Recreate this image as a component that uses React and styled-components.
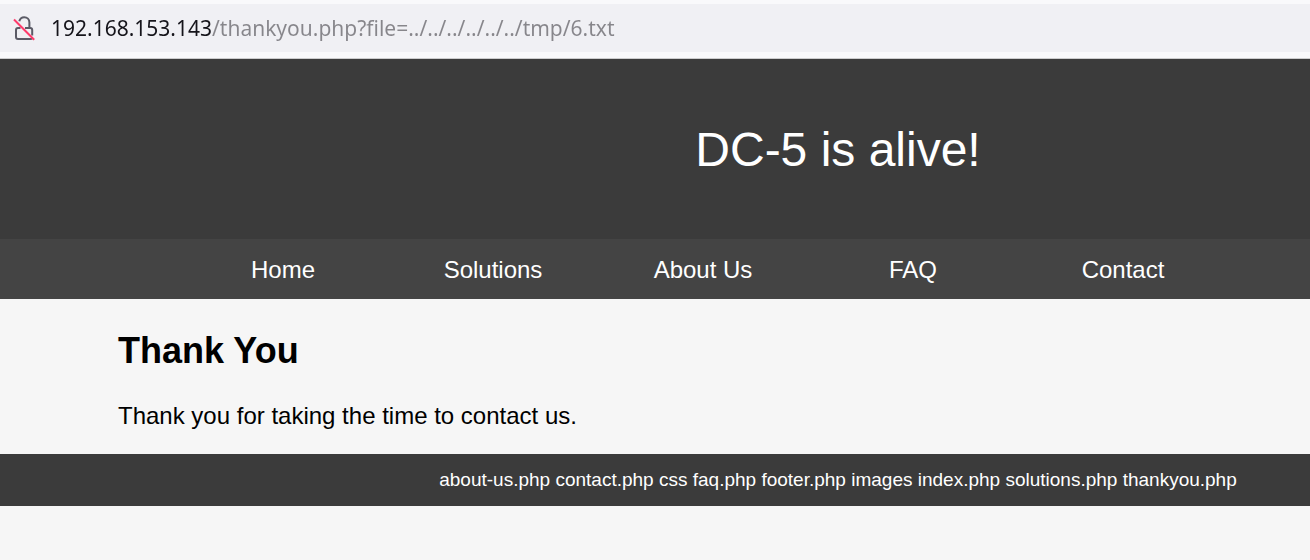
import React, { useState } from "react";
import styled, { createGlobalStyle } from "styled-components";

const GlobalStyle = createGlobalStyle`
  * { box-sizing: border-box; }
  body {
    margin: 0;
    background: #f6f6f6;
    color: #000;
    font: 24px/36px "Liberation Sans", Arial, sans-serif;
    overflow-x: hidden;
  }
`;

const Toolbar = styled.div`
  padding: 4px 0 6px;
  background: #f9f9fb;
  border-bottom: 1px solid #cccccd;
`;

const AddressBar = styled.form`
  display: flex;
  align-items: center;
  gap: 15px;
  height: 48px;
  padding-left: 12px;
  background: #f0f0f4;
`;

const SecurityButton = styled.button`
  display: flex;
  padding: 0;
  border: 0;
  background: none;
`;

const AddressInput = styled.input`
  flex: 1;
  min-width: 0;
  height: 32px;
  padding: 0;
  border: 0;
  outline: 0;
  color: transparent;
  background: linear-gradient(to right, #15141a 161px, #87868b 161px);
  background-clip: text;
  -webkit-background-clip: text;
  font: 21px/32px "Noto Sans", sans-serif;
`;

const Header = styled.header`
  padding: 60px 0 58px 366px;
  background: #3b3b3b;
  color: #fff;
  text-align: center;
`;

const SiteTitle = styled.div`
  font-size: 48px;
  line-height: 62px;
`;

const Nav = styled.nav`
  display: flex;
  padding-left: 178px;
  background: #444;
`;

const NavLink = styled.a`
  flex: 0 0 210px;
  padding: 13px 0 11px;
  line-height: 36px;
  color: #fff;
  text-align: center;
  text-decoration: none;
`;

const Content = styled.main`
  padding: 30px 24px 20px 118px;
`;

const Heading = styled.h1`
  margin: 0 0 25px;
  font-size: 36px;
  line-height: 44px;
`;

const Paragraph = styled.p`
  margin: 0;
`;

const Footer = styled.footer`
  padding: 8px 0 8px 366px;
  background: #3b3b3b;
  color: #fff;
  font-size: 19px;
  text-align: center;
`;

const links = [
  ["Home", "#home"],
  ["Solutions", "#solutions"],
  ["About Us", "#about-us"],
  ["FAQ", "#faq"],
  ["Contact", "#contact"],
];

function InsecureLock() {
  return (
    <svg width="24" height="28" viewBox="0 0 24 28" fill="none" aria-hidden="true">
      <g stroke="#5b5b66" strokeWidth="2">
        <path d="M7.3 7.2C8 4.6 9.7 3.2 12.2 3.2c3 0 5.2 2.3 5.2 5.3V14" />
        <path d="M13 14h5.2a2 2 0 0 1 2 2v5.500" />
        <path d="M8.500 14H6a2 2 0 0 0-2 2v7a2 2 0 0 0 2 2h12.500c.8 0 1.400-.3 1.700-.8" />
      </g>
      <path d="M2 5.500 22.200 25.700" stroke="#ff3b6b" strokeWidth="2" />
    </svg>
  );
}

export default function App() {
  const [address, setAddress] = useState(
    "192.168.153.143/thankyou.php?file=../../../../../../tmp/6.txt"
  );
  return (
    <>
      <GlobalStyle />
      <Toolbar>
        <AddressBar onSubmit={(event) => event.preventDefault()}>
          <SecurityButton type="button" aria-label="Connection is not secure">
            <InsecureLock />
          </SecurityButton>
          <AddressInput
            type="text"
            aria-label="Address"
            spellCheck={false}
            value={address}
            onChange={(event) => setAddress(event.target.value)}
          />
        </AddressBar>
      </Toolbar>
      <Header>
        <SiteTitle>DC-5 is alive!</SiteTitle>
      </Header>
      <Nav>
        {links.map(([label, href]) => (
          <NavLink key={href} href={href}>{label}</NavLink>
        ))}
      </Nav>
      <Content>
        <Heading>Thank You</Heading>
        <Paragraph>Thank you for taking the time to contact us.</Paragraph>
      </Content>
      <Footer>
        about-us.php contact.php css faq.php footer.php images index.php solutions.php thankyou.php
      </Footer>
    </>
  );
}
